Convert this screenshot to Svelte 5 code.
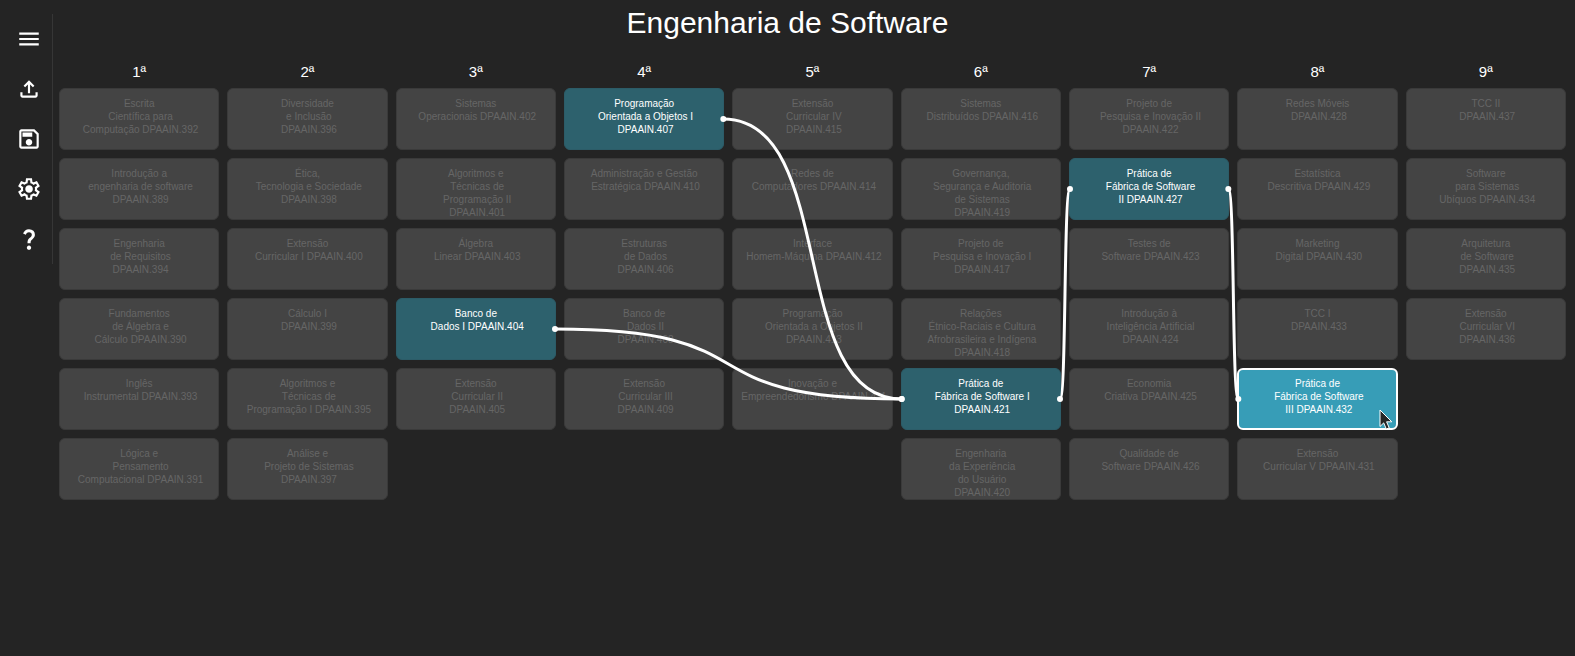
<script>
  import { onMount, tick } from 'svelte';

  const actions = [
    { label: 'Menu', path: 'M120-240v-80h720v80H120Zm0-200v-80h720v80H120Zm0-200v-80h720v80H120Z' },
    { label: 'Carregar', path: 'M440-320v-326L336-542l-56-58 200-200 200 200-56 58-104-104v326h-80ZM240-160q-33 0-56.5-23.5T160-240v-120h80v120h480v-120h80v120q0 33-23.5 56.5T720-160H240Z' },
    { label: 'Salvar', path: 'M840-680v480q0 33-23.5 56.5T760-120H200q-33 0-56.5-23.5T120-200v-560q0-33 23.5-56.5T200-840h480l160 160Zm-80 34L646-760H200v560h560v-446ZM480-240q50 0 85-35t35-85q0-50-35-85t-85-35q-50 0-85 35t-35 85q0 50 35 85t85 35ZM240-560h360v-160H240v160Z' },
    { label: 'Configurações', path: 'm370-80-16-128q-13-5-24.5-12T307-235l-119 50L78-375l103-78q-1-7-1-13.5v-27q0-6.5 1-13.5L78-585l110-190 119 50q11-8 23-15t24-12l16-128h220l16 128q13 5 24.5 12t22.5 15l119-50 110 190-103 78q1 7 1 13.5v27q0 6.5-2 13.5l103 78-110 190-118-50q-11 8-23 15t-24 12L590-80H370Zm70-80h79l14-106q31-8 57.5-23.5T639-327l99 41 39-68-86-65q5-14 7-29.5t2-31.5q0-16-2-31.5t-7-29.5l86-65-39-68-99 42q-22-23-48.5-38.5T533-694l-13-106h-79l-14 106q-31 8-57.5 23.5T321-633l-99-41-39 68 86 64q-5 15-7 30t-2 32q0 16 2 31t7 30l-86 65 39 68 99-42q22 23 48.5 38.5T427-266l13 106Zm42-180q58 0 99-41t41-99q0-58-41-99t-99-41q-59 0-99.5 41T342-480q0 58 40.5 99t99.5 41Z' },
    { label: 'Ajuda', path: 'M424-320q0-81 14.5-116.5T500-514q41-36 62.5-62.5T584-637q0-41-27.5-68T480-732q-51 0-77.5 31T365-638l-103-44q21-64 77-111t141-47q105 0 161.5 58.5T698-641q0 50-21.5 85.5T609-475q-49 47-59.5 71.5T539-320H424Zm56 240q-33 0-56.5-23.5T400-160q0-33 23.5-56.5T480-240q33 0 56.5 23.5T560-160q0 33-23.5 56.5T480-80Z' }
  ];

  // "|" separates the lines of a card; the three last digits are the course id.
  const semesters = [
    ['Escrita|Científica para|Computação DPAAIN.392', 'Introdução a|engenharia de software|DPAAIN.389', 'Engenharia|de Requisitos|DPAAIN.394', 'Fundamentos|de Álgebra e|Cálculo DPAAIN.390', 'Inglês|Instrumental DPAAIN.393', 'Lógica e|Pensamento|Computacional DPAAIN.391'],
    ['Diversidade|e Inclusão|DPAAIN.396', 'Ética,|Tecnologia e Sociedade|DPAAIN.398', 'Extensão|Curricular I DPAAIN.400', 'Cálculo I|DPAAIN.399', 'Algoritmos e|Técnicas de|Programação I DPAAIN.395', 'Análise e|Projeto de Sistemas|DPAAIN.397'],
    ['Sistemas|Operacionais DPAAIN.402', 'Algoritmos e|Técnicas de|Programação II|DPAAIN.401', 'Álgebra|Linear DPAAIN.403', 'Banco de|Dados I DPAAIN.404', 'Extensão|Curricular II|DPAAIN.405'],
    ['Programação|Orientada a Objetos I|DPAAIN.407', 'Administração e Gestão|Estratégica DPAAIN.410', 'Estruturas|de Dados|DPAAIN.406', 'Banco de|Dados II|DPAAIN.408', 'Extensão|Curricular III|DPAAIN.409'],
    ['Extensão|Curricular IV|DPAAIN.415', 'Redes de|Computadores DPAAIN.414', 'Interface|Homem-Máquina DPAAIN.412', 'Programação|Orientada a Objetos II|DPAAIN.413', 'Inovação e|Empreendedorismo DPAAIN.411'],
    ['Sistemas|Distribuídos DPAAIN.416', 'Governança,|Segurança e Auditoria|de Sistemas|DPAAIN.419', 'Projeto de|Pesquisa e Inovação I|DPAAIN.417', 'Relações|Étnico-Raciais e Cultura|Afrobrasileira e Indígena|DPAAIN.418', 'Prática de|Fábrica de Software I|DPAAIN.421', 'Engenharia|da Experiência|do Usuário|DPAAIN.420'],
    ['Projeto de|Pesquisa e Inovação II|DPAAIN.422', 'Prática de|Fábrica de Software|II DPAAIN.427', 'Testes de|Software DPAAIN.423', 'Introdução à|Inteligência Artificial|DPAAIN.424', 'Economia|Criativa DPAAIN.425', 'Qualidade de|Software DPAAIN.426'],
    ['Redes Móveis|DPAAIN.428', 'Estatística|Descritiva DPAAIN.429', 'Marketing|Digital DPAAIN.430', 'TCC I|DPAAIN.433', 'Prática de|Fábrica de Software|III DPAAIN.432', 'Extensão|Curricular V DPAAIN.431'],
    ['TCC II|DPAAIN.437', 'Software|para Sistemas|Ubíquos DPAAIN.434', 'Arquitetura|de Software|DPAAIN.435', 'Extensão|Curricular VI|DPAAIN.436']
  ].map((list) => list.map((text) => ({ id: text.slice(-3), text: text.replaceAll('|', '\n ') })));

  const selected = '432';
  const links = [['407', '421'], ['404', '421'], ['421', '427'], ['427', '432']];
  const related = new Set(links.flat());

  let board;
  let curves = $state([]);

  // Each link runs from the right edge of a course to the left edge of the next.
  function measure() {
    const origin = board.getBoundingClientRect();
    const box = (id) => board.querySelector(`[data-id="${id}"]`).getBoundingClientRect();
    curves = links.map(([from, to]) => {
      const a = box(from);
      const b = box(to);
      const x1 = a.right - origin.left - 1;
      const y1 = a.top + a.height / 2 - origin.top;
      const x2 = b.left - origin.left + 1;
      const y2 = b.top + b.height / 2 - origin.top;
      const pull = (x2 - x1) * 0.65;
      return { x1, y1, x2, y2, d: `M${x1} ${y1}C${x1 + pull} ${y1} ${x2 - pull} ${y2} ${x2} ${y2}` };
    });
  }

  onMount(() => {
    tick().then(measure);
    const observer = new ResizeObserver(measure);
    observer.observe(board);
    return () => observer.disconnect();
  });
</script>

<div class="page">
  <h1>Engenharia de Software</h1>
  <div class="body">
    <nav aria-label="Ferramentas">
      {#each actions as action}
        <button type="button" class="tool" aria-label={action.label}>
          <svg viewBox="0 -960 960 960" aria-hidden="true"><path d={action.path} /></svg>
        </button>
      {/each}
    </nav>
    <main class="board" bind:this={board}>
      {#each semesters as courses, i}
        <section class="semester">
          <h2>{i + 1}ª</h2>
          {#each courses as course}
            <button
              type="button"
              class="course"
              class:related={related.has(course.id)}
              class:selected={course.id === selected}
              data-id={course.id}
            ><span>{course.text}</span>{#if course.id === selected}<svg class="pointer" viewBox="0 0 14 21" aria-hidden="true"><path d="M1 1v16.5l3.7-3.6 2.6 6.1 2.9-1.2-2.6-6h5.2z" /></svg>{/if}</button>
          {/each}
        </section>
      {/each}
      <svg class="links" aria-hidden="true">
        {#each curves as c}
          <path d={c.d} />
          <circle cx={c.x1} cy={c.y1} r="3" />
          <circle cx={c.x2} cy={c.y2} r="3" />
        {/each}
      </svg>
    </main>
  </div>
</div>

<style>
  :global(body) {
    margin: 0;
    background: #242424;
  }

  .page {
    min-height: 100vh;
    box-sizing: border-box;
    font-family: 'Liberation Sans', Arial, sans-serif;
    color: #fff;
    background: #242424;
    display: grid;
  }

  h1,
  .body {
    grid-area: 1 / 1;
  }

  h1 {
    margin: 0;
    padding-top: 5px;
    font-size: 30px;
    font-weight: 400;
    line-height: 36px;
    text-align: center;
  }

  .body {
    display: flex;
    align-items: flex-start;
    padding: 14px 9px 0 5px;
  }

  nav {
    flex: none;
    display: flex;
    flex-direction: column;
    border-right: 1px solid #363636;
  }

  .tool {
    width: 47px;
    height: 50px;
    padding: 0;
    border: 0;
    background: none;
    display: grid;
    place-items: center;
    cursor: pointer;
  }

  .tool svg {
    width: 26px;
    height: 26px;
    fill: #fff;
  }

  .board {
    position: relative;
    flex: 1;
    min-width: 0;
    margin-left: 6px;
    padding-top: 50px;
    display: grid;
    grid-template-columns: repeat(9, minmax(0, 1fr));
    gap: 8px;
    align-items: start;
  }

  .semester {
    display: flex;
    flex-direction: column;
    gap: 8px;
  }

  h2 {
    margin: 0;
    font-size: 15px;
    font-weight: 400;
    line-height: 16px;
    text-align: center;
  }

  .course {
    position: relative;
    height: 62px;
    padding: 8px 0 0;
    border: 1px solid #3a3a3a;
    border-radius: 6px;
    background: #444;
    color: #666;
    font: 10px/13px 'Liberation Sans', Arial, sans-serif;
    display: flex;
    justify-content: center;
    align-items: flex-start;
    text-align: center;
    white-space: pre;
  }

  .related {
    border-color: #2c5c68;
    background: #2d616d;
    color: #fff;
  }

  .selected {
    padding-top: 7px;
    border: 2px solid #fff;
    background: #379db7;
  }

  .pointer {
    position: absolute;
    right: 3px;
    bottom: -2px;
    width: 14px;
    height: 21px;
    fill: #262626;
    stroke: #fff;
    stroke-width: 1;
  }

  .links {
    position: absolute;
    inset: 0;
    width: 100%;
    height: 100%;
    overflow: visible;
    pointer-events: none;
  }

  .links path {
    fill: none;
    stroke: #fff;
    stroke-width: 3;
  }

  .links circle {
    fill: #fff;
  }
</style>
